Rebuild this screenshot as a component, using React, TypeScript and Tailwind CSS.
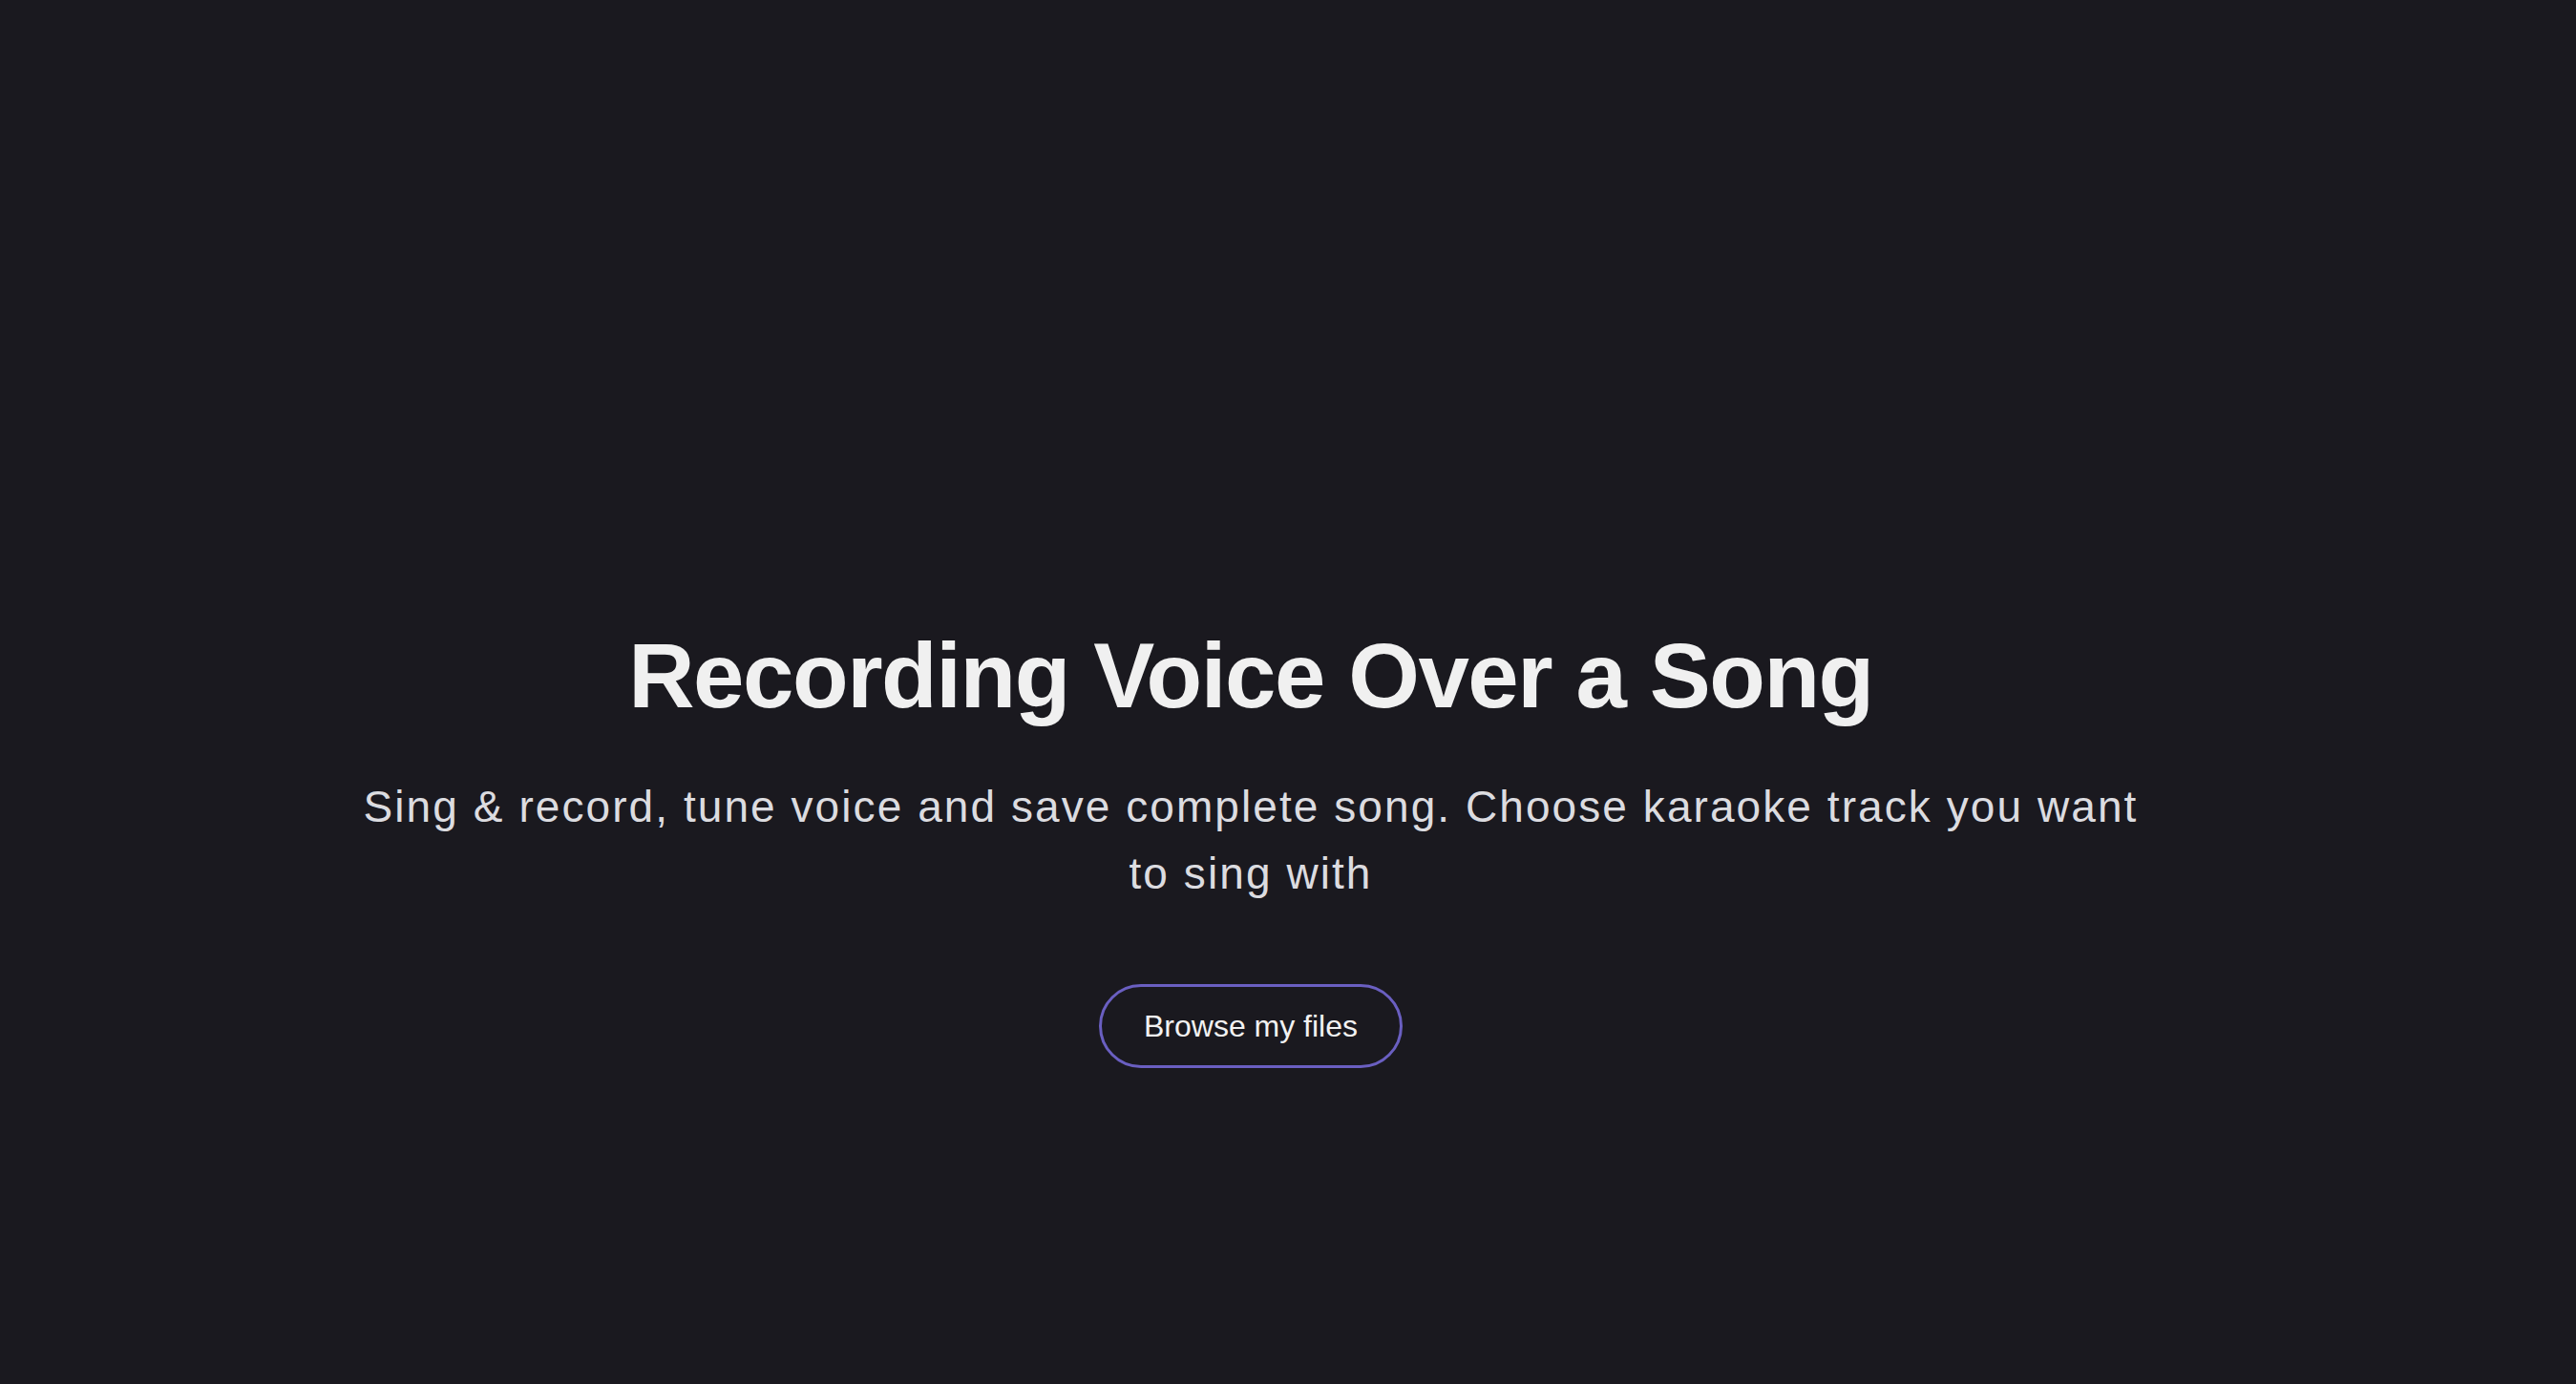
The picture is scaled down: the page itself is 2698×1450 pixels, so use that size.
export default function App() {
  return (
    <div className="min-h-screen bg-[#1a191f] font-['Liberation_Sans',Arial,sans-serif]">
      <div className="flex flex-col items-center pl-0 pr-[78px] pt-[650px]">
        <h1 className="text-[96px] font-bold leading-[1.2] tracking-[-0.015em] text-[#f0f0f0]">
          Recording Voice Over a Song
        </h1>
        <p className="mt-[45px] max-w-[1890px] text-center text-[46px] leading-[70px] tracking-[0.045em] text-[#dcdce0]">
          Sing &amp; record, tune voice and save complete song. Choose karaoke
          track you want to sing with
        </p>
        <button className="mt-[81px] h-[88px] w-[318px] rounded-full border-[3px] border-[#6a5fc1] text-[32px] text-[#f2f2f2]">
          Browse my files
        </button>
      </div>
    </div>
  );
}
